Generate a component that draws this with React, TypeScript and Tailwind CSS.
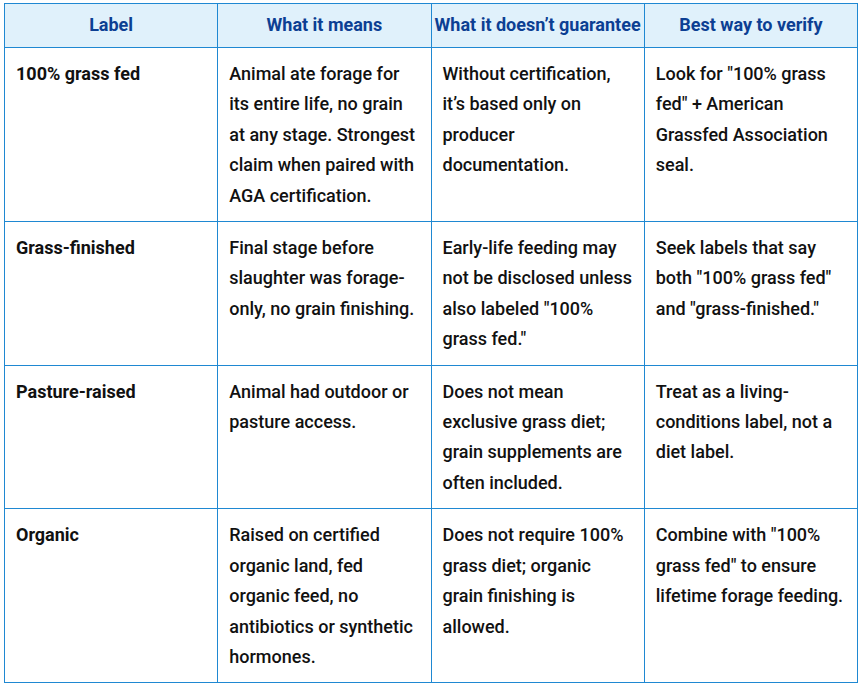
const rows = [
  {
    label: "100% grass fed",
    means: "Animal ate forage for its entire life, no grain at any stage. Strongest claim when paired with AGA certification.",
    not: "Without certification, it’s based only on producer documentation.",
    verify: 'Look for "100% grass fed" + American Grassfed Association seal.',
  },
  {
    label: "Grass-finished",
    means: "Final stage before slaughter was forage-only, no grain finishing.",
    not: 'Early-life feeding may not be disclosed unless also labeled "100% grass fed."',
    verify: 'Seek labels that say both "100% grass fed" and "grass-finished."',
  },
  {
    label: "Pasture-raised",
    means: "Animal had outdoor or pasture access.",
    not: "Does not mean exclusive grass diet; grain supplements are often included.",
    verify: "Treat as a living-conditions label, not a diet label.",
  },
  {
    label: "Organic",
    means: "Raised on certified organic land, fed organic feed, no antibiotics or synthetic hormones.",
    not: "Does not require 100% grass diet; organic grain finishing is allowed.",
    verify: 'Combine with "100% grass fed" to ensure lifetime forage feeding.',
  },
];

const headers = ["Label", "What it means", "What it doesn’t guarantee", "Best way to verify"];

export default function App() {
  return (
    <div className="bg-white pl-[4px] pt-[3px] w-[862px] h-[692px] font-['Roboto',sans-serif]">
      <table className="table-fixed border-collapse w-[854px] text-[18px] leading-[30.4px] text-[#111]">
        <thead>
          <tr className="bg-[#e0f1fb]">
            {headers.map((h) => (
              <th
                key={h}
                className="border border-[#1f88d2] px-[1px] py-[6px] font-bold text-[#0c3f93] text-center h-[44px] whitespace-nowrap"
              >
                {h}
              </th>
            ))}
          </tr>
        </thead>
        <tbody>
          {rows.map((r) => (
            <tr key={r.label}>
              <td className="border border-[#1f88d2] px-[11px] pt-[11px] pb-[10px] align-top font-bold">{r.label}</td>
              <td className="border border-[#1f88d2] px-[11px] pt-[11px] pb-[10px] align-top font-medium">{r.means}</td>
              <td className="border border-[#1f88d2] px-[11px] pt-[11px] pb-[10px] align-top font-medium">{r.not}</td>
              <td className="border border-[#1f88d2] px-[11px] pt-[11px] pb-[10px] align-top font-medium">{r.verify}</td>
            </tr>
          ))}
        </tbody>
      </table>
    </div>
  );
}
